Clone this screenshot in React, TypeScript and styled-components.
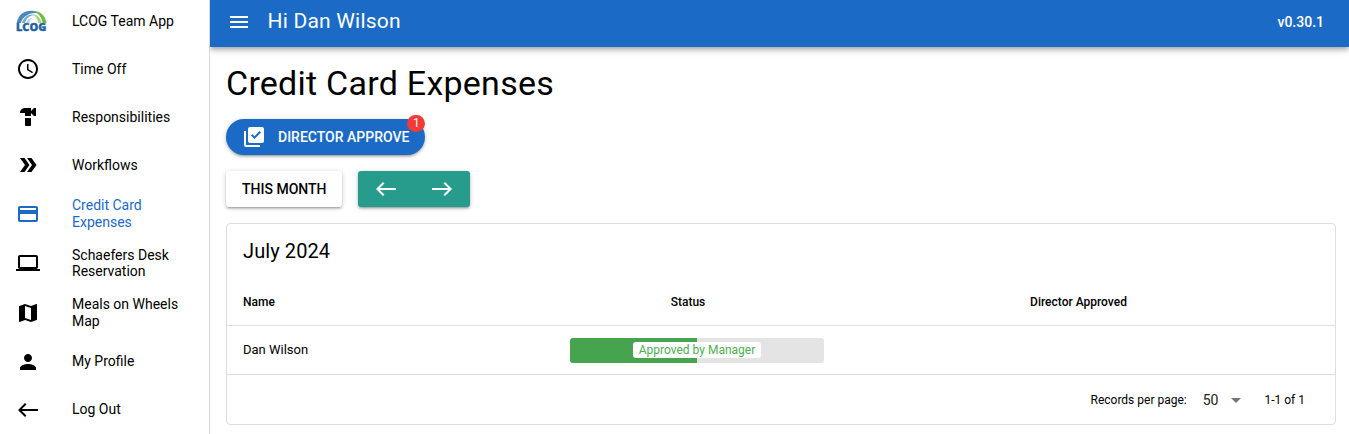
import React from 'react';
import styled, { createGlobalStyle } from 'styled-components';
import {
  MdAccessTime, MdHardware, MdDoubleArrow, MdCreditCard, MdComputer, MdMap, MdPerson,
  MdWest, MdEast, MdMenu, MdLibraryAddCheck, MdArrowDropDown,
} from 'react-icons/md';

const Global = createGlobalStyle`
  *, *::before, *::after { box-sizing: border-box; }
  body { margin: 0; overflow: hidden; background: #fff; color: #000; font-family: Roboto, sans-serif; font-size: 14px; line-height: 1.5; }
  svg { display: block; flex: none; }
  button { font-family: inherit; }
`;

const Shell = styled.div`
  display: flex;
  height: 434px;
`;

const Sidebar = styled.nav`
  width: 210px;
  flex: none;
  border-right: 1px solid #d8d8d8;
`;

const NavItem = styled.a<{ $active?: boolean; $first?: boolean }>`
  display: flex;
  align-items: center;
  min-height: ${p => (p.$first ? 45 : 48)}px;
  padding: ${p => (p.$first ? '5px 16px 8px' : '8px 16px')};
  color: ${p => (p.$active ? '#1a6ac6' : '#000')};
`;

const NavIcon = styled.span`
  width: 56px;
  flex: none;
  font-size: 24px;
`;

const NavLabel = styled.span`
  line-height: 16.8px;
`;

const Main = styled.div`
  flex: 1;
  min-width: 0;
`;

const Toolbar = styled.header`
  display: flex;
  align-items: center;
  height: 47px;
  padding: 0 25px 3px 17px;
  background: #1a6ac6;
  color: #fff;
  box-shadow: 0 2px 4px -1px rgba(0, 0, 0, 0.2), 0 4px 5px rgba(0, 0, 0, 0.14), 0 1px 10px rgba(0, 0, 0, 0.12);
  clip-path: inset(0 0 -20px 0);
`;

const Greeting = styled.div`
  flex: 1;
  margin-left: 16.5px;
  padding-bottom: 2px;
  font-size: 21px;
  line-height: 32px;
  letter-spacing: 0.21px;
`;

const Version = styled.div`
  font-weight: 500;
`;

const Content = styled.main`
  padding: 16px 13px 0 16px;
`;

const Heading = styled.h1`
  margin: 0 0 16px;
  font-size: 34px;
  font-weight: 400;
  line-height: 40px;
  letter-spacing: 0.25px;
`;

const raised = '0 1px 5px rgba(0,0,0,0.2), 0 2px 2px rgba(0,0,0,0.14), 0 3px 1px -2px rgba(0,0,0,0.12)';

const Button = styled.button<{ $pill?: boolean }>`
  position: relative;
  display: flex;
  align-items: center;
  height: 36px;
  padding: 0 16px;
  border: 0;
  border-radius: ${p => (p.$pill ? 28 : 3)}px;
  background: ${p => (p.$pill ? '#1a6ac6' : '#fff')};
  color: ${p => (p.$pill ? '#fff' : '#000')};
  font-size: 14px;
  font-weight: 500;
  white-space: nowrap;
  box-shadow: ${raised};
  svg { margin-right: 12px; }
`;

const Badge = styled.span`
  position: absolute;
  top: -4px;
  right: 0;
  height: 17px;
  width: 18px;
  border-radius: 9px;
  background: #f23a36;
  font-size: 12px;
  font-weight: 400;
  line-height: 17px;
  text-align: center;
`;

const Controls = styled.div`
  display: flex;
  gap: 16px;
  margin: 16px 0;
`;

const Pager = styled.div`
  display: flex;
  border-radius: 3px;
  background: #279c8d;
  color: #fff;
  box-shadow: ${raised};
`;

const PagerButton = styled.button`
  display: grid;
  place-items: center;
  width: 56px;
  height: 36px;
  padding: 0;
  border: 0;
  background: none;
  color: inherit;
`;

const Card = styled.section`
  height: 202px;
  border: 1px solid #dedede;
  border-radius: 4px;
`;

const CardTitle = styled.h2`
  margin: 0;
  padding: 11px 16px 10px;
  font-size: 20px;
  font-weight: 400;
  line-height: 32px;
  letter-spacing: 0.1px;
`;

const Row = styled.div<{ $head?: boolean }>`
  display: grid;
  grid-template-columns: 327px 286px 1fr;
  align-items: center;
  height: 49px;
  padding-top: ${p => (p.$head ? 2 : 0)}px;
  border-bottom: 1px solid #dedede;
  font-size: ${p => (p.$head ? 12 : 13)}px;
  font-weight: ${p => (p.$head ? 500 : 400)};
`;

const Cell = styled.div<{ $center?: boolean; $sortable?: boolean }>`
  padding: 0 ${p => (p.$sortable ? 34 : 16)}px 0 16px;
  text-align: ${p => (p.$center ? 'center' : 'left')};
`;

const Progress = styled.div`
  display: flex;
  align-items: center;
  justify-content: center;
  height: 25px;
  border-radius: 3px;
  background: linear-gradient(to right, #45a44d 50%, #e4e4e4 50%);
`;

const Status = styled.span`
  height: 16px;
  padding: 0 6px;
  border-radius: 3px;
  background: #fff;
  color: #4caf50;
  font-size: 12px;
  line-height: 16px;
`;

const Footer = styled.footer`
  display: flex;
  align-items: center;
  justify-content: flex-end;
  height: 49px;
  padding: 1px 30px 0 16px;
  font-size: 12px;
`;

const Select = styled.span`
  display: flex;
  align-items: center;
  margin: 0 16px;
  color: #222;
  font-size: 14px;
  svg { margin-left: 6px; color: #757575; }
`;

const Logo = () => (
  <svg width="32" height="24" viewBox="0 0 32 24" role="img" aria-label="LCOG">
    <path d="M0.8 14C2 6 8 1.800 15 1.800c4.200 0 8 1.300 10.600 3.600C19.500 2.200 7.500 4.500 4.800 14z" fill="#4589bd" />
    <path d="M6 14C8 7 14 3.900 19.500 6.300 14.500 6 10.500 8.500 9 14z" fill="#76a9d2" />
    <path d="M17 2.100C24.500 2.200 29.500 6.600 30.500 14h-3.800C25.500 8 22 3.800 17 2.100z" fill="#73ba4c" />
    <path d="M16 5.200C21.500 5.500 24.800 8.700 25.600 14h-3.400C21.600 9.500 19.500 6.500 16 5.200z" fill="#a5d580" />
    <path d="M10.500 14c1-3.500 3.500-5.700 7-5.400-2.300.8-3.400 2.600-4 5.400z" fill="#b9d4e8" />
    <text x="0" y="21.800" textLength="30.300" lengthAdjust="spacingAndGlyphs" fontFamily="Open Sans, sans-serif" fontSize="9.800" fontWeight="800" fill="#1f639e" stroke="#1f639e" strokeWidth="0.35">LCOG</text>
  </svg>
);

const items = [
  { icon: <Logo />, label: 'LCOG Team App' },
  { icon: <MdAccessTime />, label: 'Time Off' },
  { icon: <MdHardware />, label: 'Responsibilities' },
  { icon: <MdDoubleArrow />, label: 'Workflows' },
  { icon: <MdCreditCard />, label: 'Credit Card Expenses', active: true },
  { icon: <MdComputer />, label: 'Schaefers Desk Reservation' },
  { icon: <MdMap />, label: 'Meals on Wheels Map' },
  { icon: <MdPerson />, label: 'My Profile' },
  { icon: <MdWest />, label: 'Log Out' },
];

export default function App() {
  return (
    <Shell>
      <Global />
      <Sidebar>
        {items.map((item, i) => (
          <NavItem key={item.label} $active={item.active} $first={i === 0}>
            <NavIcon>{item.icon}</NavIcon>
            <NavLabel>{item.label}</NavLabel>
          </NavItem>
        ))}
      </Sidebar>
      <Main>
        <Toolbar>
          <MdMenu size={24} />
          <Greeting>Hi Dan Wilson</Greeting>
          <Version>v0.30.1</Version>
        </Toolbar>
        <Content>
          <Heading>Credit Card Expenses</Heading>
          <Button $pill>
            <MdLibraryAddCheck size={24} />
            DIRECTOR APPROVE
            <Badge>1</Badge>
          </Button>
          <Controls>
            <Button>THIS MONTH</Button>
            <Pager>
              <PagerButton aria-label="Previous month"><MdWest size={24} /></PagerButton>
              <PagerButton aria-label="Next month"><MdEast size={24} /></PagerButton>
            </Pager>
          </Controls>
          <Card>
            <CardTitle>July 2024</CardTitle>
            <Row $head>
              <Cell>Name</Cell>
              <Cell $center $sortable>Status</Cell>
              <Cell $center $sortable>Director Approved</Cell>
            </Row>
            <Row>
              <Cell>Dan Wilson</Cell>
              <Cell><Progress><Status>Approved by Manager</Status></Progress></Cell>
              <Cell />
            </Row>
            <Footer>
              <span>Records per page:</span>
              <Select>50<MdArrowDropDown size={24} /></Select>
              <span>1-1 of 1</span>
            </Footer>
          </Card>
        </Content>
      </Main>
    </Shell>
  );
}
